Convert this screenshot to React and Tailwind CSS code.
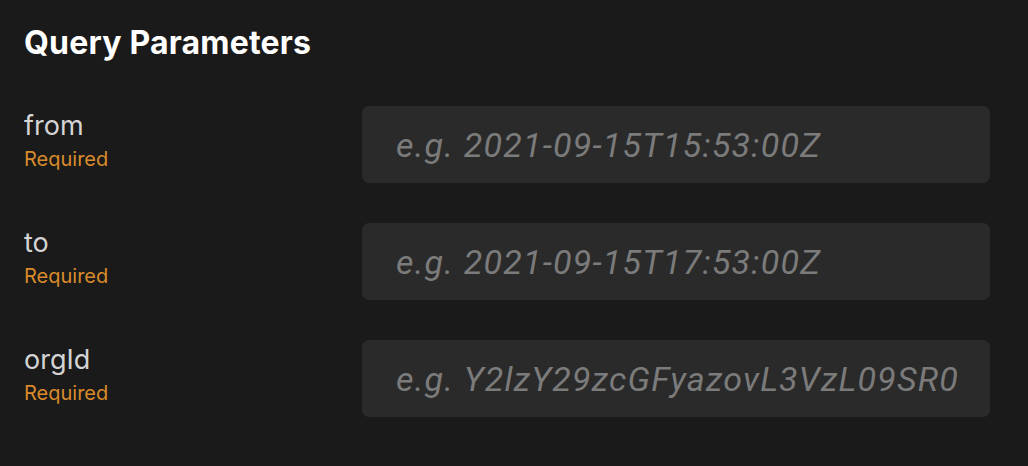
const params = [
  { name: 'from', placeholder: 'e.g. 2021-09-15T15:53:00Z' },
  { name: 'to', placeholder: 'e.g. 2021-09-15T17:53:00Z' },
  { name: 'orgId', placeholder: 'e.g. Y2lzY29zcGFyazovL3VzL09SR0FOSVpBVElPTi8' },
];

export default function App() {
  return (
    <div className="w-[1028px] h-[466px] bg-[#1a1a1a] px-6 pt-[24px] font-['Inter',sans-serif] overflow-hidden">
      <h2 className="text-[32px] leading-[38px] font-bold tracking-[0.2px] text-white">Query Parameters</h2>
      <div className="mt-[44px] flex flex-col gap-[40px]">
        {params.map((p) => (
          <div key={p.name} className="flex items-start">
            <div className="w-[338px] pt-[4px]">
              <div className="text-[27px] leading-[32px] text-[#d4d4d4]">{p.name}</div>
              <div className="mt-[5px] text-[20px] leading-[24px] text-[#d98b2b]">Required</div>
            </div>
            <input
              readOnly
              placeholder={p.placeholder}
              className="w-[628px] h-[77px] rounded-[7px] bg-[#2a2a2a] pl-[34px] pr-[32px] text-[34px] tracking-[1.2px] italic font-['Roboto',sans-serif] text-white placeholder:text-[#7b7b7b] outline-none"
            />
          </div>
        ))}
      </div>
    </div>
  );
}
